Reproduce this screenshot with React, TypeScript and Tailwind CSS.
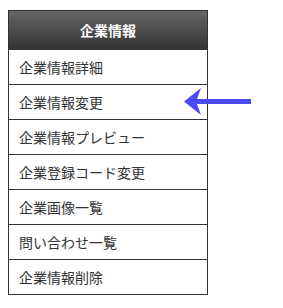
import React from 'react';

const items = [
  '企業情報詳細',
  '企業情報変更',
  '企業情報プレビュー',
  '企業登録コード変更',
  '企業画像一覧',
  '問い合わせ一覧',
  '企業情報削除',
];

const App: React.FC = () => {
  return (
    <div
      className="relative w-[283px] h-[308px] bg-white pt-[10px] pl-2"
      style={{ fontFamily: '"Noto Sans CJK JP", "Noto Sans", sans-serif' }}
    >
      {/* Menu */}
      <div className="w-[200px] border-t border-l border-r border-[#333]">
        <div className="h-[39px] flex items-center justify-center bg-gradient-to-b from-[#666666] to-[#333333] text-white text-[14px] font-bold">
          企業情報
        </div>
        {items.map((item) => (
          <div
            key={item}
            className="h-[35px] flex items-center pl-[10px] border-b border-[#333] text-[14px] text-[#333]"
          >
            {item}
          </div>
        ))}
      </div>

      {/* Arrow */}
      <svg
        className="absolute left-[184px] top-[88px]"
        width="68"
        height="27"
        viewBox="0 0 68 27"
      >
        <polygon
          points="0,13.5 17,0 13,11 67,11 67,16 13,16 17,27"
          fill="#4a4af2"
        />
      </svg>
    </div>
  );
};

export default App;
